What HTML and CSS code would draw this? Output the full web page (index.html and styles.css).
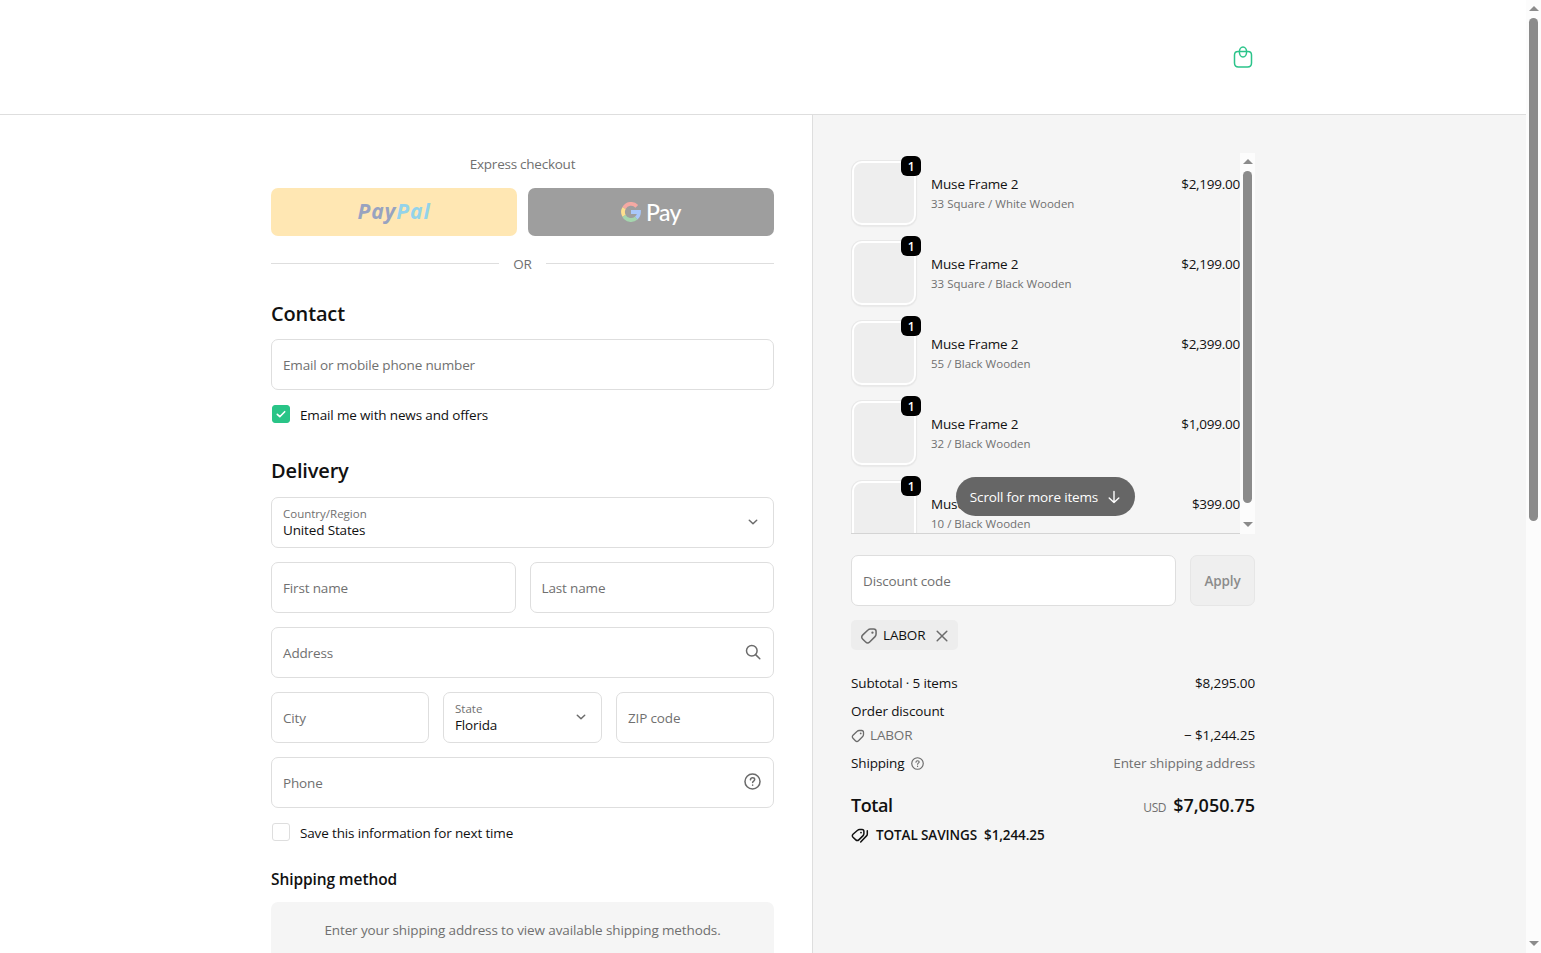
FILE: index.html
```html
<!DOCTYPE html>
<html lang="en">
<head>
    <meta charset="UTF-8">
    <meta name="viewport" content="width=device-width, initial-scale=1.0">
    <title>Checkout</title>
    <link rel="stylesheet" href="styles.css">
</head>
<body>
    <!-- Shared icons -->
    <svg class="sprite" width="0" height="0">
        <symbol id="icon-chevron" viewBox="0 0 14 14">
            <path d="M3.300 5.300l3.700 3.500 3.700-3.500"/>
        </symbol>
        <symbol id="icon-help" viewBox="0 0 14 14">
            <circle cx="7" cy="7" r="6.200"/>
            <path d="M5.300 5.600c.1-1 .8-1.600 1.800-1.600s1.700.6 1.700 1.400c0 1.200-1.700 1.200-1.700 2.400"/>
            <path d="M7.100 9.900v.2"/>
        </symbol>
        <symbol id="icon-tag" viewBox="0 0 14 14">
            <path d="M8.200 1.500h2.400c1.100 0 1.900.8 1.900 1.900v2.100c0 .8-.3 1.500-.8 2l-4.200 4.200c-.9.9-2.200.9-3.100 0L2 9.300c-.9-.9-.9-2.100 0-3l4.200-4c.5-.5 1.200-.8 2-.8z"/>
            <circle class="dot" cx="9.700" cy="4.400" r=".9"/>
        </symbol>
    </svg>

    <div class="window">
        <div class="page">
            <header class="header">
                <div class="header-inner">
                    <a href="#" class="cart" aria-label="Cart">
                        <svg width="20" height="24" viewBox="0 0 20 24">
                            <path d="M5 6.500h10c2.200 0 3.500 1.200 3.500 3.500v8c0 2.500-1.400 4-4 4h-9c-2.600 0-4-1.500-4-4v-8c0-2.300 1.300-3.500 3.500-3.500z"/>
                            <ellipse cx="10" cy="7" rx="3.600" ry="5"/>
                        </svg>
                    </a>
                </div>
            </header>

            <div class="columns">
                <main class="main">
                    <p class="express-title">Express checkout</p>
                    <div class="express">
                        <button class="pay paypal"><span class="pp-a">Pay</span><span class="pp-b">Pal</span></button>
                        <button class="pay gpay">
                            <svg width="20" height="20" viewBox="0 0 20 20">
                                <path stroke="#f5a9a3" d="M15.800 4.300A8 8 0 0 0 3 6.200"/>
                                <path stroke="#fde08e" d="M3 6.200a8 8 0 0 0 0 7.600"/>
                                <path stroke="#a5d6ae" d="M3 13.800a8 8 0 0 0 12.300 2.200"/>
                                <path stroke="#a9c8fa" d="M15.300 16A8 8 0 0 0 18 10h-8"/>
                            </svg>
                            <span>Pay</span>
                        </button>
                    </div>
                    <div class="or"><span>OR</span></div>

                    <h2>Contact</h2>
                    <input class="field" type="text" placeholder="Email or mobile phone number">
                    <label class="check">
                        <span class="box checked">
                            <svg width="12" height="12" viewBox="0 0 12 12"><path d="M2.300 6.300l2.500 2.400 4.900-5"/></svg>
                        </span>
                        <span>Email me with news and offers</span>
                    </label>

                    <h2 class="delivery">Delivery</h2>
                    <div class="fields">
                        <div class="field select">
                            <div>
                                <small>Country/Region</small>
                                <span>United States</span>
                            </div>
                            <svg class="icon chevron" width="14" height="14"><use href="#icon-chevron"/></svg>
                        </div>
                        <div class="row">
                            <input class="field" type="text" placeholder="First name">
                            <input class="field" type="text" placeholder="Last name">
                        </div>
                        <div class="field select">
                            <span class="hint">Address</span>
                            <svg class="icon" width="16" height="16" viewBox="0 0 16 16"><circle cx="6.800" cy="6.800" r="5.300"/><path d="M10.600 10.600l4.200 4.200"/></svg>
                        </div>
                        <div class="row">
                            <input class="field" type="text" placeholder="City">
                            <div class="field select">
                                <div>
                                    <small>State</small>
                                    <span>Florida</span>
                                </div>
                                <svg class="icon chevron" width="14" height="14"><use href="#icon-chevron"/></svg>
                            </div>
                            <input class="field" type="text" placeholder="ZIP code">
                        </div>
                        <div class="field select">
                            <span class="hint">Phone</span>
                            <svg class="icon help" width="17" height="17"><use href="#icon-help"/></svg>
                        </div>
                    </div>
                    <label class="check">
                        <span class="box"></span>
                        <span>Save this information for next time</span>
                    </label>

                    <h3>Shipping method</h3>
                    <div class="notice">Enter your shipping address to view available shipping methods.</div>
                </main>

                <aside class="summary">
                    <div class="cart-list">
                        <div class="items">
                            <div class="item">
                                <div class="thumb"><span class="qty">1</span></div>
                                <div class="info"><p>Muse Frame 2</p><small>33 Square / White Wooden</small></div>
                                <span class="price">$2,199.00</span>
                            </div>
                            <div class="item">
                                <div class="thumb"><span class="qty">1</span></div>
                                <div class="info"><p>Muse Frame 2</p><small>33 Square / Black Wooden</small></div>
                                <span class="price">$2,199.00</span>
                            </div>
                            <div class="item">
                                <div class="thumb"><span class="qty">1</span></div>
                                <div class="info"><p>Muse Frame 2</p><small>55 / Black Wooden</small></div>
                                <span class="price">$2,399.00</span>
                            </div>
                            <div class="item">
                                <div class="thumb"><span class="qty">1</span></div>
                                <div class="info"><p>Muse Frame 2</p><small>32 / Black Wooden</small></div>
                                <span class="price">$1,099.00</span>
                            </div>
                            <div class="item">
                                <div class="thumb"><span class="qty">1</span></div>
                                <div class="info"><p>Muse Frame 2</p><small>10 / Black Wooden</small></div>
                                <span class="price">$399.00</span>
                            </div>
                        </div>
                        <div class="scrollbar">
                            <i class="up"></i>
                            <div class="track"><div class="handle"></div></div>
                            <i class="down"></i>
                        </div>
                        <div class="more">
                            <span>Scroll for more items</span>
                            <svg width="14" height="14" viewBox="0 0 14 14"><path d="M7 1.500v11M2.200 8l4.800 4.600L11.800 8"/></svg>
                        </div>
                    </div>

                    <div class="discount">
                        <input class="field" type="text" placeholder="Discount code">
                        <button class="apply">Apply</button>
                    </div>
                    <div class="chip">
                        <svg class="icon" width="18" height="18"><use href="#icon-tag"/></svg>
                        <span>LABOR</span>
                        <svg class="icon" width="12" height="12" viewBox="0 0 12 12"><path d="M1.200 1.200l9.600 9.600M10.800 1.200l-9.600 9.600"/></svg>
                    </div>

                    <div class="totals">
                        <div class="line"><span>Subtotal · 5 items</span><span>$8,295.00</span></div>
                        <div class="line"><span>Order discount</span></div>
                        <div class="line labor">
                            <span class="muted"><svg class="icon" width="14" height="14"><use href="#icon-tag"/></svg>LABOR</span>
                            <span>− $1,244.25</span>
                        </div>
                        <div class="line">
                            <span class="ship">Shipping<svg class="icon help" width="13" height="13"><use href="#icon-help"/></svg></span>
                            <span class="muted">Enter shipping address</span>
                        </div>
                    </div>
                    <div class="total">
                        <strong>Total</strong>
                        <span class="usd">USD</span>
                        <strong class="sum">$7,050.75</strong>
                    </div>
                    <div class="savings">
                        <svg class="icon" width="18" height="16" viewBox="0 0 18 16">
                            <path d="M8.600 1.500h2.400c1.100 0 1.900.8 1.900 1.900v2.200c0 .8-.3 1.500-.8 2l-4.300 4.300c-.9.9-2.100.9-3 0L2 9.300c-.9-.9-.9-2.100 0-3l4.600-4c.5-.5 1.200-.8 2-.8z"/>
                            <path d="M16.300 2.800v3.100c0 .8-.3 1.500-.8 2l-5.800 6"/>
                            <circle class="dot" cx="10" cy="4.600" r=".9"/>
                        </svg>
                        <span>TOTAL SAVINGS</span>
                        <span>$1,244.25</span>
                    </div>
                </aside>
            </div>
        </div>

        <div class="scrollbar page-scroll">
            <i class="up"></i>
            <div class="track"><div class="handle"></div></div>
            <i class="down"></i>
        </div>
    </div>
</body>
</html>
```
FILE: styles.css
```css
* {
    box-sizing: border-box;
}
body {
    margin: 0;
    font-family: "Open Sans", "Noto Sans", sans-serif;
    font-size: 13.5px;
    line-height: 21px;
    letter-spacing: -0.15px;
    color: #111;
    background: #fff;
    overflow: hidden;
}
p, h2, h3 {
    margin: 0;
}
input, button {
    font: inherit;
    letter-spacing: inherit;
}
.sprite {
    position: absolute;
}
svg {
    fill: none;
    stroke-linecap: round;
    stroke-linejoin: round;
    flex: none;
}
.icon {
    stroke: #6b6b6b;
    stroke-width: 1.5;
}
.help {
    stroke-width: 1.25;
}
.dot {
    fill: #6b6b6b;
    stroke: none;
}
.window {
    display: flex;
    height: 953px;
}
.page {
    flex: 1;
    display: flex;
    flex-direction: column;
    overflow: hidden;
}

/* Header */
.header {
    height: 115px;
    flex: none;
    border-bottom: 1px solid #dedede;
}
.header-inner {
    width: 984px;
    margin: 0 0 0 271px;
    padding: 45px 2px 0 0;
    display: flex;
    justify-content: flex-end;
}
.cart svg {
    display: block;
    stroke: #2bc48a;
    stroke-width: 1.5;
}

.columns {
    flex: 1;
    display: flex;
    min-height: 0;
}
.main {
    width: 812px;
    flex: none;
    padding: 39px 38px 0 271px;
}
.summary {
    flex: 1;
    padding: 38px 271px 0 38px;
    background: #f5f5f5;
    border-left: 1px solid #dedede;
}

/* Express checkout */
.express-title {
    text-align: center;
    color: #707070;
    letter-spacing: -0.25px;
}
.express {
    display: flex;
    gap: 11px;
    margin-top: 13px;
}
.pay {
    flex: 1;
    height: 48px;
    border: 0;
    border-radius: 7px;
    padding: 0;
    display: flex;
    align-items: center;
    justify-content: center;
}
.paypal {
    background: #ffe7b3;
    font-size: 21px;
    font-weight: 700;
    font-style: italic;
    letter-spacing: 0.9px;
    padding-bottom: 2px;
}
.pp-a {
    color: #98a3c0;
}
.pp-b {
    color: #93d3ea;
}
.gpay {
    background: #9e9e9e;
    color: #fff;
    gap: 5px;
    font-family: Lato, sans-serif;
    font-size: 23px;
    font-weight: 500;
    letter-spacing: -0.6px;
}
.gpay svg {
    stroke-width: 3.8;
    stroke-linecap: butt;
    stroke-linejoin: miter;
}
.or {
    display: flex;
    align-items: center;
    gap: 14px;
    margin-top: 17px;
    color: #707070;
}
.or span {
    padding-top: 1px;
    margin-bottom: -1px;
}
.or::before, .or::after {
    content: "";
    flex: 1;
    height: 1px;
    background: #dedede;
}

h2 {
    margin-top: 26px;
    font-size: 20px;
    line-height: 28px;
    font-weight: 600;
    letter-spacing: -0.15px;
}
h2 + .field {
    margin-top: 11px;
}
.delivery {
    margin-top: 31px;
}
h3 {
    margin-top: 24px;
    font-size: 15.5px;
    line-height: 22px;
    font-weight: 600;
    letter-spacing: -0.1px;
}

/* Fields */
.field {
    display: block;
    width: 100%;
    height: 51px;
    padding: 0 11px;
    border: 1px solid #dedede;
    border-radius: 7px;
    background: #fff;
    color: #111;
    min-width: 0;
}
.field::placeholder {
    color: #707070;
    opacity: 1;
}
.select {
    display: flex;
    align-items: center;
    justify-content: space-between;
    padding-right: 12px;
}
.select div {
    padding-top: 2px;
}
.select small {
    display: block;
    font-size: 11.5px;
    line-height: 14px;
    letter-spacing: 0;
    color: #707070;
}
.select div span {
    display: block;
    line-height: 19px;
}
.hint {
    padding-top: 2px;
    color: #707070;
}
.select .icon {
    margin-bottom: 2px;
}
.select .chevron {
    margin-right: 1px;
}
.fields {
    display: flex;
    flex-direction: column;
    gap: 14px;
    margin-top: 12px;
}
.row {
    display: flex;
    gap: 14px;
}
.row .field {
    flex: 1;
}
.check {
    display: flex;
    align-items: center;
    gap: 10px;
    margin-top: 15px;
    padding-left: 1px;
}
.box {
    width: 18px;
    height: 18px;
    margin-bottom: 3px;
    border: 1px solid #dedede;
    border-radius: 3px;
    display: flex;
    align-items: center;
    justify-content: center;
}
.checked {
    background: #29c487;
    border-color: #29c487;
}
.checked svg {
    stroke: #fff;
    stroke-width: 1.6;
}
.notice {
    margin-top: 12px;
    height: 70px;
    padding-top: 18px;
    border-radius: 7px;
    background: #f5f5f5;
    color: #707070;
    text-align: center;
    letter-spacing: -0.12px;
}

/* Cart items */
.cart-list {
    position: relative;
    display: flex;
    height: 381px;
}
.items {
    flex: 1;
    overflow: hidden;
    border-bottom: 1px solid #d4d4d4;
}
.item {
    display: flex;
    height: 80px;
    padding: 8px 0 0 1px;
}
.thumb {
    position: relative;
    width: 64px;
    height: 64px;
    border: 2px solid #fff;
    border-radius: 10px;
    background: #eee;
    box-shadow: 0 0 0 1px #e8e8e8, 0 1px 2px rgba(0, 0, 0, 0.15);
}
.qty {
    position: absolute;
    top: -7px;
    right: -7px;
    width: 20px;
    height: 20px;
    border-radius: 6px;
    background: #000;
    color: #fff;
    font-size: 12px;
    font-weight: 600;
    line-height: 21px;
    text-align: center;
}
.info {
    flex: 1;
    padding: 13px 0 0 15px;
}
.info p {
    line-height: 20px;
}
.info small {
    display: block;
    font-size: 11.5px;
    line-height: 19px;
    letter-spacing: 0;
    color: #707070;
}
.price {
    padding-top: 13px;
    letter-spacing: -0.25px;
}
.more {
    position: absolute;
    left: 105px;
    top: 324px;
    width: 179px;
    height: 39px;
    border-radius: 20px;
    background: #666;
    color: #fff;
    display: flex;
    align-items: center;
    justify-content: center;
    gap: 9px;
}
.more span {
    padding-top: 2px;
}
.more svg {
    stroke: #fff;
    stroke-width: 1.4;
}

/* Scrollbars */
.scrollbar {
    width: 15px;
    flex: none;
    display: flex;
    flex-direction: column;
    align-items: center;
    padding: 6px 0 7px;
    background: #fcfcfc;
}
.track {
    flex: 1;
    margin: 7px 0;
}
.handle {
    width: 9px;
    height: 332px;
    border-radius: 5px;
    background: #8b8b8b;
}
.up, .down {
    border: 5px solid transparent;
    border-top-width: 0;
    border-bottom: 5px solid #8b8b8b;
}
.down {
    border-top: 5px solid #8b8b8b;
    border-bottom-width: 0;
}
.page-scroll .handle {
    height: 503px;
}

/* Discount */
.discount {
    display: flex;
    gap: 14px;
    margin-top: 21px;
}
.discount .field {
    flex: 1;
}
.apply {
    width: 65px;
    height: 51px;
    padding: 2px 0 0;
    border: 1px solid #e6e6e6;
    border-radius: 7px;
    background: #efefef;
    color: #8b8b8b;
    font-weight: 600;
}
.chip {
    display: flex;
    align-items: center;
    gap: 5px;
    width: 107px;
    height: 30px;
    margin-top: 14px;
    padding: 0 10px 0 9px;
    border-radius: 5px;
    background: #ededed;
}
.chip .icon {
    margin-top: 2px;
    stroke-width: 1.2;
}
.chip .icon:last-child {
    margin-left: auto;
    stroke-width: 1.5;
}

/* Totals */
.totals {
    margin-top: 23px;
}
.line {
    display: flex;
    justify-content: space-between;
    margin-bottom: 7px;
}
.line span:last-child {
    letter-spacing: -0.12px;
}
.labor {
    margin-top: -4px;
}
.muted {
    color: #707070;
}
.labor .muted, .ship {
    display: flex;
    align-items: center;
    gap: 5px;
}
.labor .icon {
    stroke-width: 1.3;
}
.ship {
    gap: 7px;
}
.total {
    display: flex;
    align-items: baseline;
    margin-top: 17px;
    font-size: 18px;
    line-height: 28px;
    letter-spacing: -0.4px;
}
.total strong {
    font-weight: 600;
}
.total .sum {
    letter-spacing: 0;
}
.usd {
    margin-left: auto;
    margin-right: 7px;
    font-size: 12px;
    color: #707070;
}
.savings {
    display: flex;
    align-items: center;
    gap: 7px;
    margin-top: 3px;
    font-weight: 600;
    letter-spacing: -0.1px;
}
.savings .icon {
    stroke: #111;
}
.savings .dot {
    fill: #111;
}
```
